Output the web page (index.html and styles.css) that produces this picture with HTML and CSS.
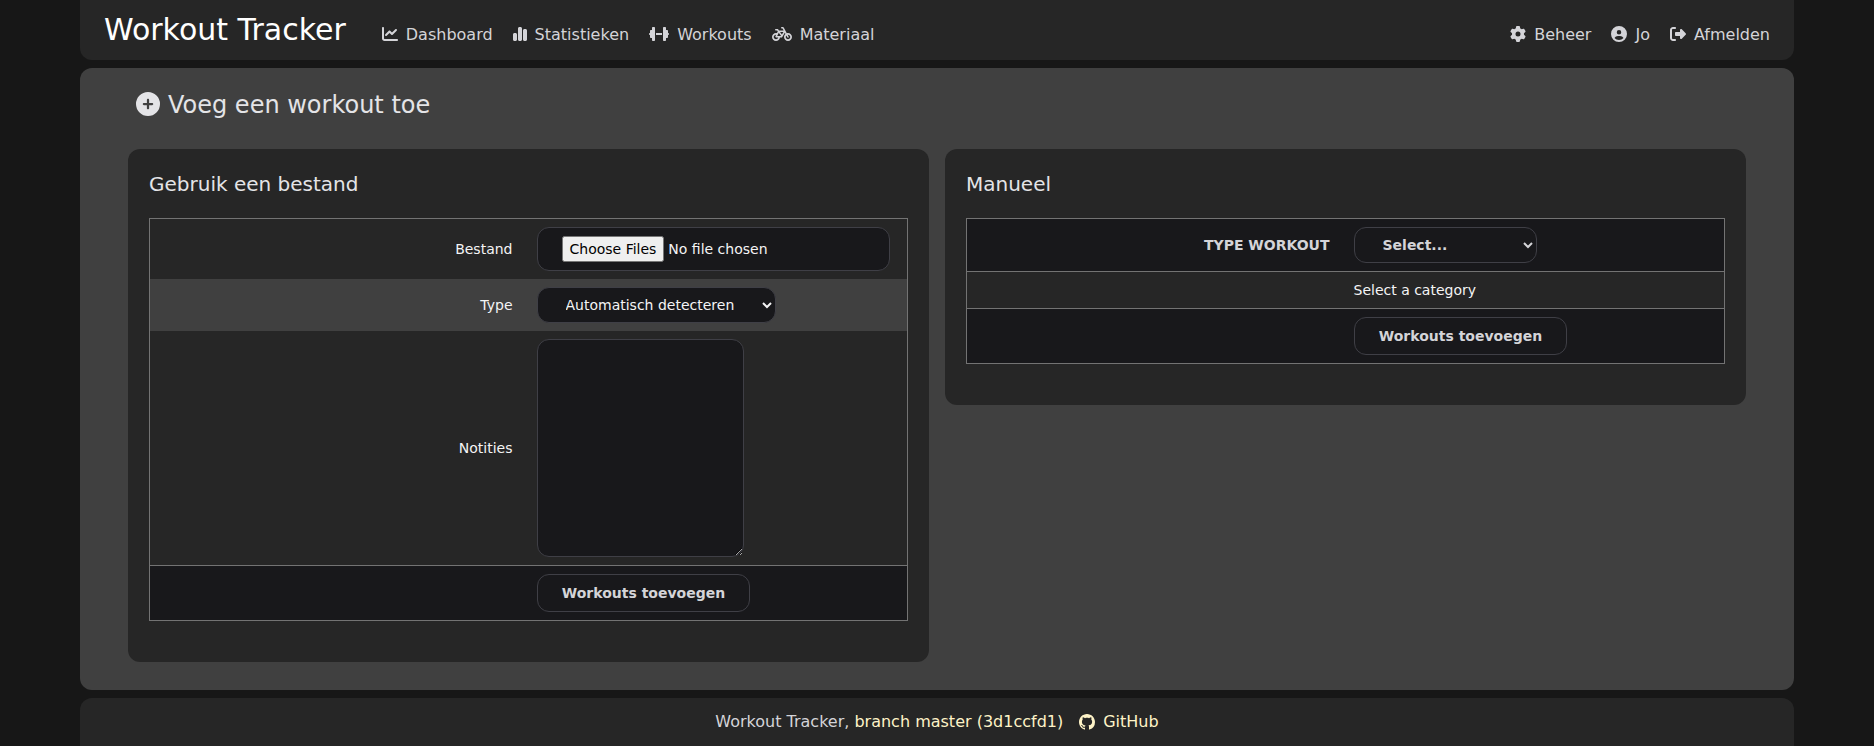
FILE: index.html
```html
<!DOCTYPE html>
<html lang="nl">
<head>
<meta charset="utf-8">
<title>Workout Tracker</title>
<link rel="stylesheet" href="styles.css">
</head>
<body>
<div class="page">
  <header class="header">
    <a class="brand">Workout Tracker</a>
    <nav class="nav">
      <a class="nav-item"><svg class="icon" viewBox="0 0 512 512"><path d="M64 64c0-17.700-14.300-32-32-32S0 46.300 0 64V400c0 44.200 35.800 80 80 80H480c17.700 0 32-14.300 32-32s-14.300-32-32-32H80c-8.800 0-16-7.200-16-16V64zm406.600 86.600c12.500-12.500 12.500-32.800 0-45.300s-32.800-12.500-45.300 0L320 210.700l-57.400-57.400c-12.500-12.500-32.800-12.500-45.300 0l-112 112c-12.500 12.500-12.500 32.800 0 45.300s32.800 12.500 45.300 0L240 221.300l57.400 57.400c12.500 12.500 32.800 12.500 45.300 0l128-128z"/></svg>Dashboard</a>
      <a class="nav-item"><svg class="icon icon-narrow" viewBox="0 0 448 512"><path d="M160 80c0-26.500 21.500-48 48-48h32c26.500 0 48 21.500 48 48V432c0 26.500-21.500 48-48 48H208c-26.500 0-48-21.500-48-48V80zM0 272c0-26.500 21.500-48 48-48H80c26.500 0 48 21.500 48 48V432c0 26.500-21.500 48-48 48H48c-26.500 0-48-21.500-48-48V272zM368 96h32c26.500 0 48 21.500 48 48V432c0 26.500-21.500 48-48 48H368c-26.500 0-48-21.500-48-48V144c0-26.500 21.500-48 48-48z"/></svg>Statistieken</a>
      <a class="nav-item"><svg class="icon icon-wide" viewBox="0 0 640 512"><path d="M96 64c0-17.700 14.300-32 32-32h32c17.700 0 32 14.300 32 32V224v64V448c0 17.700-14.300 32-32 32H128c-17.700 0-32-14.300-32-32V384H64c-17.700 0-32-14.300-32-32V288c-17.700 0-32-14.300-32-32s14.300-32 32-32V160c0-17.700 14.300-32 32-32H96V64zm448 0v64h32c17.700 0 32 14.300 32 32v64c17.700 0 32 14.300 32 32s-14.300 32-32 32v64c0 17.700-14.300 32-32 32H544v64c0 17.700-14.300 32-32 32H480c-17.700 0-32-14.300-32-32V288 224 64c0-17.700 14.300-32 32-32h32c17.700 0 32 14.300 32 32zM416 224v64H224V224H416z"/></svg>Workouts</a>
      <a class="nav-item"><svg class="icon icon-wide" viewBox="0 0 640 512"><path d="M312 32c-13.300 0-24 10.700-24 24s10.700 24 24 24h25.700l34.600 64H222.900l-27.400-38C191 99.700 183.700 96 176 96H120c-13.300 0-24 10.700-24 24s10.700 24 24 24h43.700l22.100 30.700-26.600 53.100c-10-2.500-20.500-3.800-31.200-3.800C57.300 224 0 281.300 0 352s57.300 128 128 128c65.300 0 119.100-48.900 127-112h49c8.500 0 16.300-4.500 20.700-11.800l84.800-143.500 21.700 40.100C402.400 276.300 384 312 384 352c0 70.700 57.300 128 128 128s128-57.300 128-128-57.300-128-128-128c-13.500 0-26.500 2.100-38.700 6L375.400 48.800C369.800 38.400 359 32 347.200 32H312zM458.600 303.700l32.300 59.700c6.300 11.700 20.900 16 32.500 9.700s16-20.900 9.700-32.500l-32.300-59.700c3.600-.6 7.400-.9 11.200-.9 39.800 0 72 32.200 72 72s-32.200 72-72 72-72-32.200-72-72c0-18.600 7-35.500 18.600-48.300zM133.200 368h65c-7.300 32.100-36 56-70.200 56-39.800 0-72-32.200-72-72s32.200-72 72-72c1.700 0 3.400 .1 5.100 .2l-24.200 48.500c-9 18.100 4.100 39.400 24.300 39.400zm33.700-48l50.700-101.300 72.900 101.200-.1 .1H166.900zm90.600-128H365.900L317 274.800 257.400 192z"/></svg>Materiaal</a>
    </nav>
    <nav class="nav nav-user">
      <a class="nav-item"><svg class="icon" viewBox="0 0 512 512"><path d="M495.900 166.600c3.200 8.700 .5 18.400-6.400 24.600l-43.300 39.400c1.100 8.300 1.700 16.800 1.700 25.400s-.6 17.100-1.700 25.400l43.300 39.400c6.900 6.200 9.600 15.900 6.400 24.600c-4.400 11.900-9.700 23.300-15.800 34.300l-4.700 8.100c-6.600 11-14 21.400-22.100 31.200c-5.900 7.200-15.700 9.600-24.500 6.800l-55.700-17.700c-13.400 10.300-28.200 18.900-44 25.400l-12.500 57.100c-2 9.100-9 16.300-18.200 17.800c-13.800 2.300-28 3.500-42.500 3.500s-28.700-1.200-42.500-3.500c-9.200-1.500-16.200-8.700-18.200-17.800l-12.500-57.100c-15.800-6.500-30.600-15.100-44-25.400L83.100 425.900c-8.800 2.800-18.600 .3-24.500-6.800c-8.100-9.800-15.500-20.200-22.100-31.200l-4.700-8.100c-6.100-11-11.400-22.400-15.800-34.300c-3.200-8.700-.5-18.400 6.400-24.600l43.300-39.400C64.600 273.100 64 264.600 64 256s.6-17.100 1.700-25.400L22.400 191.200c-6.900-6.200-9.600-15.900-6.400-24.600c4.400-11.900 9.700-23.300 15.800-34.300l4.700-8.100c6.600-11 14-21.400 22.100-31.200c5.900-7.200 15.700-9.600 24.500-6.800l55.700 17.700c13.400-10.300 28.200-18.900 44-25.400l12.500-57.100c2-9.100 9-16.300 18.200-17.800C227.300 1.200 241.500 0 256 0s28.700 1.200 42.500 3.500c9.200 1.500 16.200 8.700 18.200 17.800l12.500 57.100c15.800 6.500 30.600 15.100 44 25.400l55.700-17.700c8.800-2.800 18.600-.3 24.500 6.800c8.100 9.800 15.500 20.200 22.100 31.200l4.700 8.100c6.100 11 11.400 22.400 15.800 34.300zM256 336a80 80 0 1 0 0-160 80 80 0 1 0 0 160z"/></svg>Beheer</a>
      <a class="nav-item"><svg class="icon" viewBox="0 0 512 512"><path d="M399 384.200C376.900 345.800 335.400 320 288 320H224c-47.400 0-88.900 25.800-111 64.200c35.200 39.200 86.200 63.800 143 63.800s107.800-24.700 143-63.800zM0 256a256 256 0 1 1 512 0A256 256 0 1 1 0 256zm256 16a72 72 0 1 0 0-144 72 72 0 1 0 0 144z"/></svg>Jo</a>
      <a class="nav-item"><svg class="icon" viewBox="0 0 512 512"><path d="M377.900 105.900L500.700 228.700c7.200 7.200 11.300 17.100 11.300 27.300s-4.100 20.100-11.300 27.300L377.900 406.100c-6.400 6.400-15 9.900-24 9.900c-18.700 0-33.900-15.200-33.900-33.900l0-62.100-128 0c-17.700 0-32-14.300-32-32l0-64c0-17.700 14.300-32 32-32l128 0 0-62.100c0-18.700 15.200-33.900 33.900-33.900c9 0 17.600 3.600 24 9.900zM160 96L96 96c-17.700 0-32 14.300-32 32l0 256c0 17.700 14.300 32 32 32l64 0c17.700 0 32 14.300 32 32s-14.300 32-32 32l-64 0c-53 0-96-43-96-96L0 128C0 75 43 32 96 32l64 0c17.700 0 32 14.300 32 32s-14.300 32-32 32z"/></svg>Afmelden</a>
    </nav>
  </header>

  <main class="main">
    <h2 class="title"><svg class="title-icon" viewBox="0 0 512 512"><path d="M256 512A256 256 0 1 0 256 0a256 256 0 1 0 0 512zM232 344V280H168c-13.300 0-24-10.700-24-24s10.700-24 24-24h64V168c0-13.300 10.700-24 24-24s24 10.700 24 24v64h64c13.300 0 24 10.700 24 24s-10.700 24-24 24H280v64c0 13.300-10.700 24-24 24s-24-10.700-24-24z"/></svg>Voeg een workout toe</h2>
    <div class="cards">
      <section class="card">
        <h3 class="card-title">Gebruik een bestand</h3>
        <form class="form">
          <div class="row"><label class="label">Bestand</label><div class="field"><input class="control file" type="file" multiple></div></div>
          <div class="row row-alt"><label class="label">Type</label><div class="field"><select class="control select-type"><option>Automatisch detecteren</option></select></div></div>
          <div class="row"><label class="label">Notities</label><div class="field"><textarea class="control notes"></textarea></div></div>
          <div class="row row-dark row-foot"><span></span><div class="field"><button class="control button" type="button">Workouts toevoegen</button></div></div>
        </form>
      </section>
      <section class="card">
        <h3 class="card-title">Manueel</h3>
        <form class="form">
          <div class="row row-dark row-head"><label class="label">Type workout</label><div class="field"><select class="control select-category"><option>Select...</option></select></div></div>
          <div class="row"><span></span><div class="field">Select a category</div></div>
          <div class="row row-dark row-foot"><span></span><div class="field"><button class="control button" type="button">Workouts toevoegen</button></div></div>
        </form>
      </section>
    </div>
  </main>

  <footer class="footer">
    <span>Workout Tracker, <a class="link">branch master (3d1ccfd1)</a></span>
    <a class="link github"><svg class="icon" viewBox="0 0 16 16"><path d="M8 0C3.580 0 0 3.580 0 8c0 3.540 2.290 6.530 5.470 7.590.4.070.55-.17.55-.38 0-.19-.01-.82-.01-1.490-2.010.37-2.530-.49-2.690-.94-.09-.23-.48-.94-.82-1.130-.28-.15-.68-.52-.01-.53.63-.01 1.080.58 1.230.82.72 1.210 1.870.87 2.330.66.07-.52.28-.87.51-1.070-1.780-.2-3.640-.89-3.640-3.950 0-.87.31-1.590.82-2.150-.08-.2-.36-1.020.08-2.120 0 0 .67-.21 2.200.82.64-.18 1.320-.27 2-.27s1.360.09 2 .27c1.530-1.040 2.200-.82 2.200-.82.44 1.100.16 1.920.08 2.120.51.56.82 1.270.82 2.150 0 3.070-1.870 3.750-3.650 3.950.29.25.54.73.54 1.480 0 1.070-.01 1.930-.01 2.200 0 .21.15.46.55.38A8.010 8.010 0 0 0 16 8c0-4.420-3.580-8-8-8z"/></svg>GitHub</a>
  </footer>
</div>
</body>
</html>
```
FILE: styles.css
```css
* { box-sizing: border-box; }

body {
  margin: 0;
  background: #171717;
  color: #d4d4d8;
  font: 16px/24px "DejaVu Sans", sans-serif;
}

h2, h3 { margin: 0; font-weight: 400; }
svg { fill: currentColor; flex: none; }

.page {
  display: flex;
  flex-direction: column;
  gap: 8px;
  height: 746px;
  margin: 0 80px;
  overflow: hidden;
}

.header {
  display: flex;
  align-items: flex-start;
  height: 60px;
  padding: 12px 24px 0;
  background: #262626;
  border-radius: 0 0 12px 12px;
}
.brand { color: #fff; font-size: 30px; line-height: 36px; }
.nav { display: flex; gap: 20px; margin: 11px 0 0 36px; }
.nav-user { margin-left: auto; }
.nav-item { display: flex; align-items: center; gap: 8px; }
.nav-item .icon { margin-bottom: 2px; }
.icon { width: 16px; height: 16px; }
.icon-narrow { width: 14px; }
.icon-wide { width: 20px; }

.main {
  height: 622px;
  padding: 20px 48px 0;
  background: #404040;
  border-radius: 12px;
}
.title {
  display: flex;
  align-items: flex-start;
  gap: 8px;
  padding: 1px 0 0 8px;
  color: #e4e4e7;
  font-size: 24px;
  line-height: 32px;
}
.title-icon { width: 24px; height: 24px; margin-top: 3px; }

.cards {
  display: grid;
  grid-template-columns: 1fr 1fr;
  align-items: start;
  gap: 16px;
  margin-top: 28px;
}
.card {
  padding: 21px 21px 41px;
  background: #262626;
  border-radius: 12px;
}
.card-title {
  margin-bottom: 20px;
  color: #e4e4e7;
  font-size: 20px;
  line-height: 28px;
}

.form {
  border: 1px solid #737373;
  color: #f4f4f5;
  font-size: 14px;
  line-height: 20px;
}
.row {
  display: grid;
  grid-template-columns: 378.5px 1fr;
  align-items: center;
}
.row-alt { background: #404040; }
.row-dark { background: #18181b; color: #d4d4d8; font-weight: 700; }
.row-foot { border-top: 1px solid #737373; }
.row-head { border-bottom: 1px solid #737373; }
.row-head .label { text-transform: uppercase; }
.label { padding-right: 16px; text-align: right; }
.field { display: flex; padding: 8px 17px 8px 8px; }

.control {
  border: 1px solid #3f3f46;
  border-radius: 12px;
  background: #18181b;
  color: inherit;
  font: inherit;
  padding: 8px 24px;
}
.file { width: 100%; height: 44px; }
.file::file-selector-button { padding: 3px 6px; font: inherit; }
.select-type { width: 239px; height: 36px; }
.select-category { width: 183px; height: 36px; }
.notes { width: 207px; height: 218px; }
.button { width: 213px; height: 38px; padding: 8px 0 8px 1px; }

.footer {
  display: flex;
  align-items: flex-start;
  justify-content: center;
  gap: 16px;
  flex: 1;
  padding-top: 12px;
  background: #262626;
  border-radius: 12px 12px 0 0;
}
.link { color: #fef3c7; }
.github { display: flex; align-items: center; gap: 8px; }
```
